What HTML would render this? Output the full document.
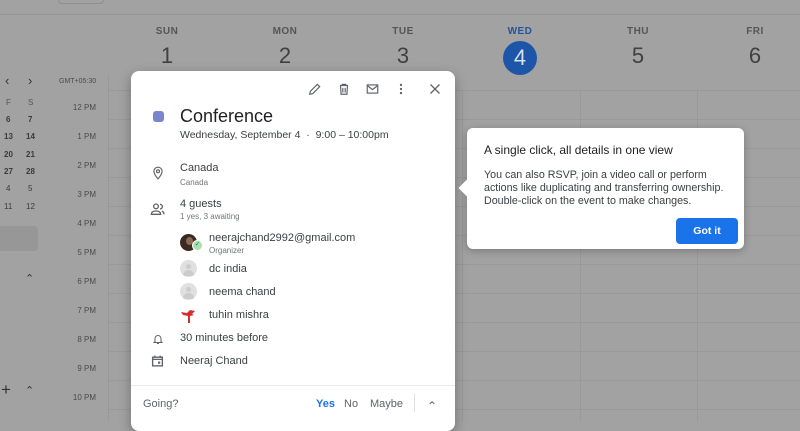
<!DOCTYPE html>
<html><head><meta charset="utf-8">
<style>
*{box-sizing:border-box;margin:0;padding:0}
body{width:800px;height:421px;overflow:hidden;background:#a2a2a2;font-family:"Liberation Sans",Arial,sans-serif;position:relative;color:#202124}
.abs{position:absolute}
.hl{position:absolute;left:108px;right:0;height:1px;background:#999}
.vl{position:absolute;top:90px;bottom:0;width:1px;background:#999}
.day{position:absolute;width:118px;text-align:center;color:#3a3a3a}
.day .n{font-size:10px;font-weight:bold;letter-spacing:.5px;margin-top:26px;color:#555}
.day .d{font-size:22px;margin-top:6px;color:#404040}
.hr{position:absolute;left:40px;width:56px;text-align:right;font-size:8px;color:#4a4a4a}
.mc{position:absolute;font-size:8px;color:#3a3a3a;font-weight:bold}
.pop{position:absolute;left:131px;top:71px;width:324px;height:360px;background:#fff;border-radius:8px;box-shadow:0 4px 12px rgba(0,0,0,.3)}
.ic{position:absolute}
.t{position:absolute;font-size:11px;color:#3c4043;white-space:nowrap}
.s{position:absolute;font-size:9px;color:#70757a;white-space:nowrap}
.av{position:absolute;width:17px;height:17px;border-radius:50%;background:#e0e0e0;overflow:hidden}
.tip{position:absolute;left:467px;top:128px;width:277px;height:121px;background:#fff;border-radius:6px;box-shadow:0 2px 8px rgba(0,0,0,.25)}
</style></head><body>
<div class="abs" style="left:58px;top:0;width:46px;height:4px;border:1px solid #8f8f8f;border-top:none;border-radius:0 0 4px 4px"></div>
<div class="abs" style="left:0;right:0;top:14px;height:1px;background:#959595"></div>
<div class="day" style="left:108px"><div class="n">SUN</div><div class="d">1</div></div>
<div class="day" style="left:226px"><div class="n">MON</div><div class="d">2</div></div>
<div class="day" style="left:344px"><div class="n">TUE</div><div class="d">3</div></div>
<div class="day" style="left:461px"><div class="n" style="color:#26549a">WED</div><div style="width:34px;height:34px;border-radius:50%;background:#1d55a8;color:#d8e0ee;font-size:22px;line-height:34px;margin:4px auto 0">4</div></div>
<div class="day" style="left:579px"><div class="n">THU</div><div class="d">5</div></div>
<div class="day" style="left:696px"><div class="n">FRI</div><div class="d">6</div></div>
<div class="hl" style="top:90px"></div>
<div class="hl" style="top:119px"></div><div class="hl" style="top:148px"></div><div class="hl" style="top:177px"></div><div class="hl" style="top:206px"></div><div class="hl" style="top:235px"></div><div class="hl" style="top:264px"></div><div class="hl" style="top:293px"></div><div class="hl" style="top:322px"></div><div class="hl" style="top:351px"></div><div class="hl" style="top:380px"></div><div class="hl" style="top:409px"></div>
<div class="vl" style="left:108px;top:75px"></div><div class="vl" style="left:462px"></div><div class="vl" style="left:580px"></div><div class="vl" style="left:697px"></div>
<div class="abs" style="left:59px;top:78px;font-size:7px;color:#4a4a4a">GMT+05:30</div>
<div class="hr" style="top:103px">12 PM</div><div class="hr" style="top:132px">1 PM</div><div class="hr" style="top:161px">2 PM</div><div class="hr" style="top:190px">3 PM</div><div class="hr" style="top:219px">4 PM</div><div class="hr" style="top:248px">5 PM</div><div class="hr" style="top:277px">6 PM</div><div class="hr" style="top:306px">7 PM</div><div class="hr" style="top:335px">8 PM</div><div class="hr" style="top:364px">9 PM</div><div class="hr" style="top:393px">10 PM</div>
<div class="abs" style="left:5px;top:73px;font-size:13px;color:#333">&#8249;</div><div class="abs" style="left:28px;top:73px;font-size:13px;color:#333">&#8250;</div>
<div class="mc" style="left:6px;top:98px;font-weight:normal;color:#555">F</div><div class="mc" style="left:28px;top:98px;font-weight:normal;color:#555">S</div>
<div class="mc" style="left:6px;top:115px">6</div><div class="mc" style="left:28px;top:115px">7</div>
<div class="mc" style="left:4px;top:132px">13</div><div class="mc" style="left:26px;top:132px">14</div>
<div class="mc" style="left:4px;top:150px">20</div><div class="mc" style="left:26px;top:150px">21</div>
<div class="mc" style="left:4px;top:167px">27</div><div class="mc" style="left:26px;top:167px">28</div>
<div class="mc" style="left:6px;top:184px;font-weight:normal">4</div><div class="mc" style="left:28px;top:184px;font-weight:normal">5</div>
<div class="mc" style="left:4px;top:202px;font-weight:normal">11</div><div class="mc" style="left:26px;top:202px;font-weight:normal">12</div>
<div class="abs" style="left:0;top:226px;width:38px;height:25px;background:#979797;border-radius:0 4px 4px 0"></div>
<div class="abs" style="left:25px;top:272px;font-size:11px;color:#333">&#8963;</div>
<div class="abs" style="left:1px;top:380px;font-size:17px;color:#333">+</div>
<div class="abs" style="left:25px;top:384px;font-size:11px;color:#333">&#8963;</div>

<div class="pop">
<svg class="ic" style="left:177px;top:11px" width="14" height="14" viewBox="0 0 24 24"><path d="M3 21l1-5L16 4l4 4L8 20z" fill="none" stroke="#5f6368" stroke-width="2"/></svg>
<svg class="ic" style="left:206px;top:11px" width="14" height="14" viewBox="0 0 24 24"><path d="M5 6h14M9 6V4h6v2M6 6l1 15h10l1-15M10 10v8M14 10v8" fill="none" stroke="#5f6368" stroke-width="2"/></svg>
<svg class="ic" style="left:234px;top:11px" width="15" height="14" viewBox="0 0 24 24"><rect x="3" y="5" width="18" height="14" fill="none" stroke="#5f6368" stroke-width="2"/><path d="M3 6l9 7 9-7" fill="none" stroke="#5f6368" stroke-width="2"/></svg>
<svg class="ic" style="left:264px;top:11px" width="12" height="14" viewBox="0 0 12 24"><circle cx="6" cy="5" r="2" fill="#5f6368"/><circle cx="6" cy="12" r="2" fill="#5f6368"/><circle cx="6" cy="19" r="2" fill="#5f6368"/></svg>
<svg class="ic" style="left:298px;top:12px" width="12" height="12" viewBox="0 0 24 24"><path d="M3 3l18 18M21 3L3 21" stroke="#5f6368" stroke-width="2.5"/></svg>
<div class="abs" style="left:22px;top:40px;width:11px;height:11px;border-radius:3px;background:#7986cb"></div>
<div class="t" style="left:49px;top:35px;font-size:18px;color:#202124">Conference</div>
<div class="t" style="left:49px;top:58px;font-size:10.5px">Wednesday, September 4 &nbsp;·&nbsp; 9:00 – 10:00pm</div>
<svg class="ic" style="left:20px;top:94px" width="14" height="16" viewBox="0 0 24 24"><path d="M12 2a7 7 0 0 0-7 7c0 5 7 13 7 13s7-8 7-13a7 7 0 0 0-7-7z" fill="none" stroke="#5f6368" stroke-width="2"/><circle cx="12" cy="9" r="2.5" fill="none" stroke="#5f6368" stroke-width="2"/></svg>
<div class="t" style="left:49px;top:91px">Canada</div>
<div class="s" style="left:49px;top:107px;font-size:8px">Canada</div>
<svg class="ic" style="left:19px;top:131px" width="16" height="14" viewBox="0 0 24 20"><circle cx="9" cy="6" r="3.5" fill="none" stroke="#5f6368" stroke-width="2"/><path d="M2 18c0-4 4-5 7-5s7 1 7 5z" fill="none" stroke="#5f6368" stroke-width="2"/><path d="M15 3a3.5 3.5 0 0 1 0 7M18 13c2 1 3 2 3 5" fill="none" stroke="#5f6368" stroke-width="2"/></svg>
<div class="t" style="left:49px;top:127px">4 guests</div>
<div class="s" style="left:49px;top:141px;font-size:8px">1 yes, 3 awaiting</div>
<div class="av" style="left:49px;top:163px;background:#3b2a22"><div style="position:absolute;left:6px;top:3px;width:7px;height:8px;border-radius:50%;background:#8a6a55"></div></div>
<div class="abs" style="left:61px;top:169px;width:11px;height:11px;border-radius:50%;background:#a8e0b0;border:1.5px solid #fff;font-size:7px;color:#188038;text-align:center;line-height:8px">✓</div>
<div class="t" style="left:78px;top:161px">neerajchand2992@gmail.com</div>
<div class="s" style="left:78px;top:175px;font-size:8px">Organizer</div>
<div class="av" style="left:49px;top:189px"><div style="position:absolute;left:6px;top:4px;width:5px;height:5px;border-radius:50%;background:#ccc"></div><div style="position:absolute;left:3px;top:10px;width:11px;height:6px;border-radius:5px 5px 0 0;background:#ccc"></div></div>
<div class="t" style="left:78px;top:192px">dc india</div>
<div class="av" style="left:49px;top:212px"><div style="position:absolute;left:6px;top:4px;width:5px;height:5px;border-radius:50%;background:#ccc"></div><div style="position:absolute;left:3px;top:10px;width:11px;height:6px;border-radius:5px 5px 0 0;background:#ccc"></div></div>
<div class="t" style="left:78px;top:215px">neema chand</div>
<svg class="ic" style="left:49px;top:236px" width="17" height="17" viewBox="0 0 17 17"><path d="M1 5l6 1 3-3 5 1-3 3 2 1-4 1v7H8V9L3 8z" fill="#d32f2f"/></svg>
<div class="t" style="left:78px;top:238px">tuhin mishra</div>
<svg class="ic" style="left:21px;top:261px" width="12" height="14" viewBox="0 0 24 24"><path d="M6 17V11a6 6 0 0 1 12 0v6l2 2H4zM10 21h4" fill="none" stroke="#5f6368" stroke-width="2"/></svg>
<div class="t" style="left:49px;top:261px">30 minutes before</div>
<svg class="ic" style="left:20px;top:283px" width="13" height="14" viewBox="0 0 24 24"><rect x="3" y="5" width="18" height="16" fill="none" stroke="#5f6368" stroke-width="2.5"/><path d="M7 2v4M17 2v4M3 9h18" stroke="#5f6368" stroke-width="2.5"/><rect x="13" y="13" width="4" height="4" fill="#5f6368"/></svg>
<div class="t" style="left:49px;top:284px">Neeraj Chand</div>
<div class="abs" style="left:0;right:0;top:314px;height:1px;background:#e8eaed"></div>
<div class="t" style="left:12px;top:327px;color:#5f6368">Going?</div>
<div class="t" style="left:185px;top:327px;color:#1a73e8;font-weight:bold">Yes</div>
<div class="t" style="left:213px;top:327px;color:#5f6368">No</div>
<div class="t" style="left:239px;top:327px;color:#5f6368">Maybe</div>
<div class="abs" style="left:283px;top:323px;width:1px;height:18px;background:#e0e0e0"></div>
<div class="t" style="left:296px;top:328px;color:#5f6368;font-size:12px">&#8963;</div>
</div>

<div class="tip">
<div class="abs" style="left:-6px;top:54px;width:12px;height:12px;background:#fff;transform:rotate(45deg)"></div>
<div class="t" style="left:17px;top:15px;font-size:12px;color:#202124">A single click, all details in one view</div>
<div class="t" style="left:17px;top:41px;font-size:10.7px;line-height:12.8px;color:#3c4043">You can also RSVP, join a video call or perform<br>actions like duplicating and transferring ownership.<br>Double-click on the event to make changes.</div>
<div class="abs" style="left:209px;top:90px;width:62px;height:26px;background:#1a73e8;border-radius:4px;color:#fff;font-size:10.5px;font-weight:bold;text-align:center;line-height:26px">Got it</div>
</div>
</body></html>
